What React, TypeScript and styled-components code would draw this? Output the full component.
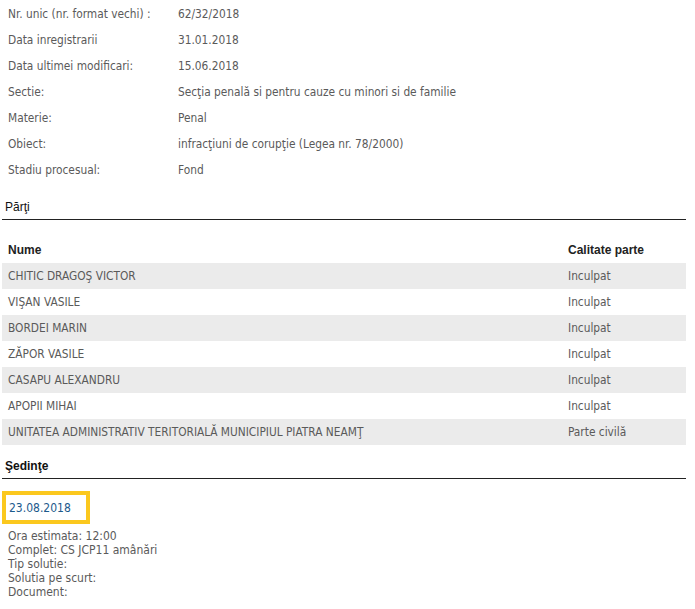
import styled, { createGlobalStyle } from "styled-components";

const GlobalStyle = createGlobalStyle`
    body {
        margin: 0;
        background: #ffffff;
        font-family: "DejaVu Sans Condensed", "DejaVu Sans", sans-serif;
    }
`;

const info = [
    ["Nr. unic (nr. format vechi) :", "62/32/2018"],
    ["Data inregistrarii", "31.01.2018"],
    ["Data ultimei modificari:", "15.06.2018"],
    ["Sectie:", "Secţia penală si pentru cauze cu minori si de familie"],
    ["Materie:", "Penal"],
    ["Obiect:", "infracţiuni de corupţie (Legea nr. 78/2000)"],
    ["Stadiu procesual:", "Fond"],
];

const parti = [
    ["CHITIC DRAGOŞ VICTOR", "Inculpat"],
    ["VIŞAN VASILE", "Inculpat"],
    ["BORDEI MARIN", "Inculpat"],
    ["ZĂPOR VASILE", "Inculpat"],
    ["CASAPU ALEXANDRU", "Inculpat"],
    ["APOPII MIHAI", "Inculpat"],
    ["UNITATEA ADMINISTRATIV TERITORIALĂ MUNICIPIUL PIATRA NEAMŢ", "Parte civilă"],
];

const detalii = [
    "Ora estimata: 12:00",
    "Complet: CS JCP11 amânări",
    "Tip solutie:",
    "Solutia pe scurt:",
    "Document:",
];

export default function App() {
    return (
        <Page>
            <GlobalStyle />
            <InfoList>
                {info.map(([label, value]) => (
                    <InfoRow key={label}>
                        <span>{label}</span>
                        <span>{value}</span>
                    </InfoRow>
                ))}
            </InfoList>

            <SectionTitle>Părţi</SectionTitle>
            <PartiTable>
                <HeadRow>
                    <HeadCell>Nume</HeadCell>
                    <HeadCell>Calitate parte</HeadCell>
                </HeadRow>
                {parti.map(([nume, calitate], i) => (
                    <PartiRow key={nume} $striped={i % 2 === 0}>
                        <Cell>{nume}</Cell>
                        <Cell>{calitate}</Cell>
                    </PartiRow>
                ))}
            </PartiTable>

            <SectionTitle $bold>Şedinţe</SectionTitle>
            <Sedinta>
                <DateBox>23.08.2018</DateBox>
                <Details>
                    {detalii.map((d) => (
                        <DetailLine key={d}>{d}</DetailLine>
                    ))}
                </Details>
            </Sedinta>
        </Page>
    );
}

const Page = styled.div`
    width: 684px;
    padding: 1px 0 0 2px;
    display: flex;
    flex-direction: column;
`;

const InfoList = styled.div`
    display: flex;
    flex-direction: column;
`;

const InfoRow = styled.div`
    display: grid;
    grid-template-columns: 170px 1fr;
    height: 26px;
    align-items: center;
    padding-left: 6px;
    font-size: 11.8px;
    color: #5a5a5a;
`;

const SectionTitle = styled.div<{ $bold?: boolean }>`
    margin-top: ${(p) => (p.$bold ? "14px" : "17px")};
    padding: 0 0 4px 3px;
    border-bottom: 1px solid #222222;
    font-family: "Liberation Sans", Arial, sans-serif;
    font-size: 12px;
    font-weight: ${(p) => (p.$bold ? 700 : 400)};
    color: #111111;
    line-height: 15px;
`;

const PartiTable = styled.div`
    margin-top: 17px;
    display: flex;
    flex-direction: column;
`;

const HeadRow = styled.div`
    display: grid;
    grid-template-columns: 560px 1fr;
    height: 26px;
    align-items: center;
    padding-left: 6px;
`;

const HeadCell = styled.span`
    font-family: "Liberation Sans", Arial, sans-serif;
    font-size: 12px;
    font-weight: 700;
    color: #222222;
`;

const PartiRow = styled.div<{ $striped: boolean }>`
    display: grid;
    grid-template-columns: 560px 1fr;
    height: 26px;
    align-items: center;
    padding-left: 6px;
    background: ${(p) => (p.$striped ? "#ebebeb" : "#ffffff")};
    font-size: 11.8px;
    color: #5a5a5a;
`;

const Cell = styled.span`
    white-space: nowrap;
`;

const Sedinta = styled.div`
    margin-top: 12px;
    display: flex;
    flex-direction: column;
`;

const DateBox = styled.div`
    align-self: flex-start;
    width: 77px;
    height: 25px;
    border: 4px solid #fbc81e;
    padding-left: 3px;
    display: flex;
    align-items: center;
    font-size: 12px;
    color: #1c5a8c;
`;

const Details = styled.div`
    padding: 5px 0 0 6px;
    display: flex;
    flex-direction: column;
`;

const DetailLine = styled.div`
    font-size: 12px;
    line-height: 14px;
    color: #5a5a5a;
`;
